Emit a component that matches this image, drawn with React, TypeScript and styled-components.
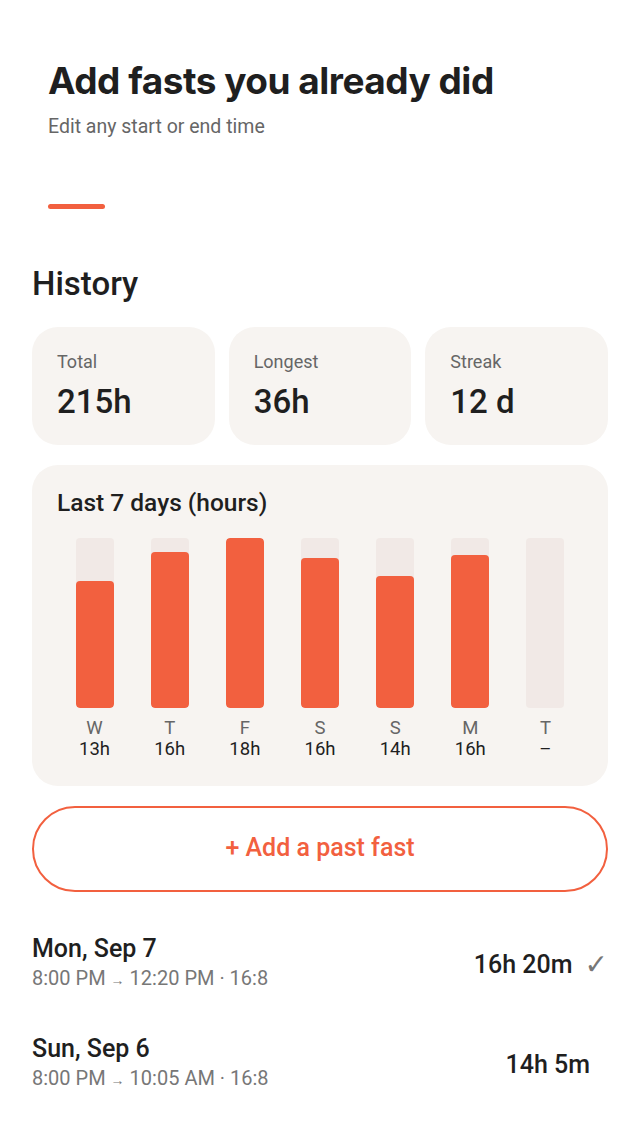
import React from 'react';
import styled, { createGlobalStyle } from 'styled-components';

const GlobalStyle = createGlobalStyle`
  * { box-sizing: border-box; }
  body {
    margin: 0;
    background: #ffffff;
    font-family: Roboto, "Noto Sans", sans-serif;
    color: #1f1f1f;
  }
`;

const Page = styled.div`
  width: 640px;
  min-height: 1138px;
  padding: 0 32px;
  background: #fff;
`;

const Header = styled.div`
  padding: 60px 16px 0;
`;

const Title = styled.h1`
  margin: 0;
  font-family: Inter, "Noto Sans", sans-serif;
  font-weight: 700;
  font-size: 37px;
  letter-spacing: -0.5px;
  line-height: 42px;
  color: #1f1f1f;
`;

const Subtitle = styled.p`
  margin: 12px 0 0;
  font-size: 19.5px;
  line-height: 26px;
  color: #666;
`;

const Accent = styled.div`
  width: 57px;
  height: 5px;
  border-radius: 3px;
  background: #f2603f;
  margin-top: 64px;
`;

const SectionTitle = styled.h2`
  margin: 56px 0 0;
  font-size: 33px;
  font-weight: 500;
  line-height: 38px;
  color: #1f1f1f;
`;

const StatsRow = styled.div`
  display: grid;
  grid-template-columns: repeat(3, 1fr);
  gap: 14px;
  margin-top: 24px;
`;

const StatCard = styled.div`
  height: 118px;
  border-radius: 26px;
  background: #f7f4f1;
  padding: 24px 25px;
`;

const StatLabel = styled.div`
  font-size: 18px;
  line-height: 22px;
  color: #666;
`;

const StatValue = styled.div`
  margin-top: 11px;
  font-size: 33px;
  font-weight: 500;
  line-height: 36px;
  color: #1f1f1f;
`;

const ChartCard = styled.div`
  margin-top: 20px;
  height: 321px;
  border-radius: 26px;
  background: #f7f4f1;
  padding: 23px 25px 0;
`;

const ChartTitle = styled.div`
  font-size: 24.5px;
  font-weight: 500;
  line-height: 30px;
  color: #1f1f1f;
`;

const Bars = styled.div`
  display: grid;
  grid-template-columns: repeat(7, 1fr);
  margin-top: 20px;
`;

const BarCol = styled.div`
  display: flex;
  flex-direction: column;
  align-items: center;
`;

const Track = styled.div`
  width: 38px;
  height: 170px;
  border-radius: 4px;
  background: #f1e9e6;
  display: flex;
  align-items: flex-end;
  overflow: hidden;
`;

const Fill = styled.div`
  width: 100%;
  border-radius: 4px;
  background: #f2603f;
`;

const DayLabel = styled.div`
  margin-top: 10px;
  font-size: 18.5px;
  line-height: 21px;
  color: #666;
`;

const DayValue = styled.div`
  font-size: 18.5px;
  line-height: 21px;
  color: #1f1f1f;
`;

const AddButton = styled.button`
  display: block;
  width: 100%;
  height: 86px;
  margin-top: 20px;
  padding: 0 0 4px;
  border: 2px solid #f2603f;
  border-radius: 43px;
  background: #fff;
  color: #f2603f;
  font-family: Roboto, sans-serif;
  font-size: 25px;
  font-weight: 500;
  cursor: pointer;
`;

const List = styled.div`
  margin-top: 42px;
  display: flex;
  flex-direction: column;
  gap: 40px;
`;

const Row = styled.div<{ $pad: number }>`
  display: flex;
  justify-content: space-between;
  align-items: center;
  padding-right: ${p => p.$pad}px;
`;

const RowDate = styled.div`
  font-size: 25px;
  font-weight: 500;
  line-height: 30px;
  color: #1f1f1f;
`;

const RowSub = styled.div`
  margin-top: 0;
  font-size: 20px;
  line-height: 28px;
  color: #777;
`;

const Arrow = styled.span`
  font-size: 14px;
  margin: 0 5px;
`;

const Duration = styled.div`
  display: flex;
  align-items: center;
  gap: 12px;
  font-size: 25px;
  font-weight: 500;
  color: #1f1f1f;
`;

const Check = styled.span`
  font-size: 28px;
  color: #777;
  font-family: "DejaVu Sans", sans-serif;
`;

const days = [
  { d: 'W', v: '13h', p: 0.747 },
  { d: 'T', v: '16h', p: 0.918 },
  { d: 'F', v: '18h', p: 1 },
  { d: 'S', v: '16h', p: 0.882 },
  { d: 'S', v: '14h', p: 0.776 },
  { d: 'M', v: '16h', p: 0.9 },
  { d: 'T', v: '–', p: 0 },
];

const fasts = [
  { date: 'Mon, Sep 7', start: '8:00 PM', end: '12:20 PM', plan: '16:8', dur: '16h 20m', done: true },
  { date: 'Sun, Sep 6', start: '8:00 PM', end: '10:05 AM', plan: '16:8', dur: '14h 5m', done: false },
];

const App: React.FC = () => {
  return (
    <Page>
      <GlobalStyle />
      <Header>
        <Title>Add fasts you already did</Title>
        <Subtitle>Edit any start or end time</Subtitle>
        <Accent />
      </Header>
      <SectionTitle>History</SectionTitle>
      <StatsRow>
        <StatCard><StatLabel>Total</StatLabel><StatValue>215h</StatValue></StatCard>
        <StatCard><StatLabel>Longest</StatLabel><StatValue>36h</StatValue></StatCard>
        <StatCard><StatLabel>Streak</StatLabel><StatValue>12 d</StatValue></StatCard>
      </StatsRow>
      <ChartCard>
        <ChartTitle>Last 7 days (hours)</ChartTitle>
        <Bars>
          {days.map((day, i) => (
            <BarCol key={i}>
              <Track>{day.p > 0 && <Fill style={{ height: `${day.p * 100}%` }} />}</Track>
              <DayLabel>{day.d}</DayLabel>
              <DayValue>{day.v}</DayValue>
            </BarCol>
          ))}
        </Bars>
      </ChartCard>
      <AddButton>+ Add a past fast</AddButton>
      <List>
        {fasts.map(f => (
          <Row key={f.date} $pad={f.done ? 0 : 18}>
            <div>
              <RowDate>{f.date}</RowDate>
              <RowSub>{f.start}<Arrow>→</Arrow>{f.end} · {f.plan}</RowSub>
            </div>
            <Duration>
              {f.dur}
              {f.done && <Check>✓</Check>}
            </Duration>
          </Row>
        ))}
      </List>
    </Page>
  );
};

export default App;
